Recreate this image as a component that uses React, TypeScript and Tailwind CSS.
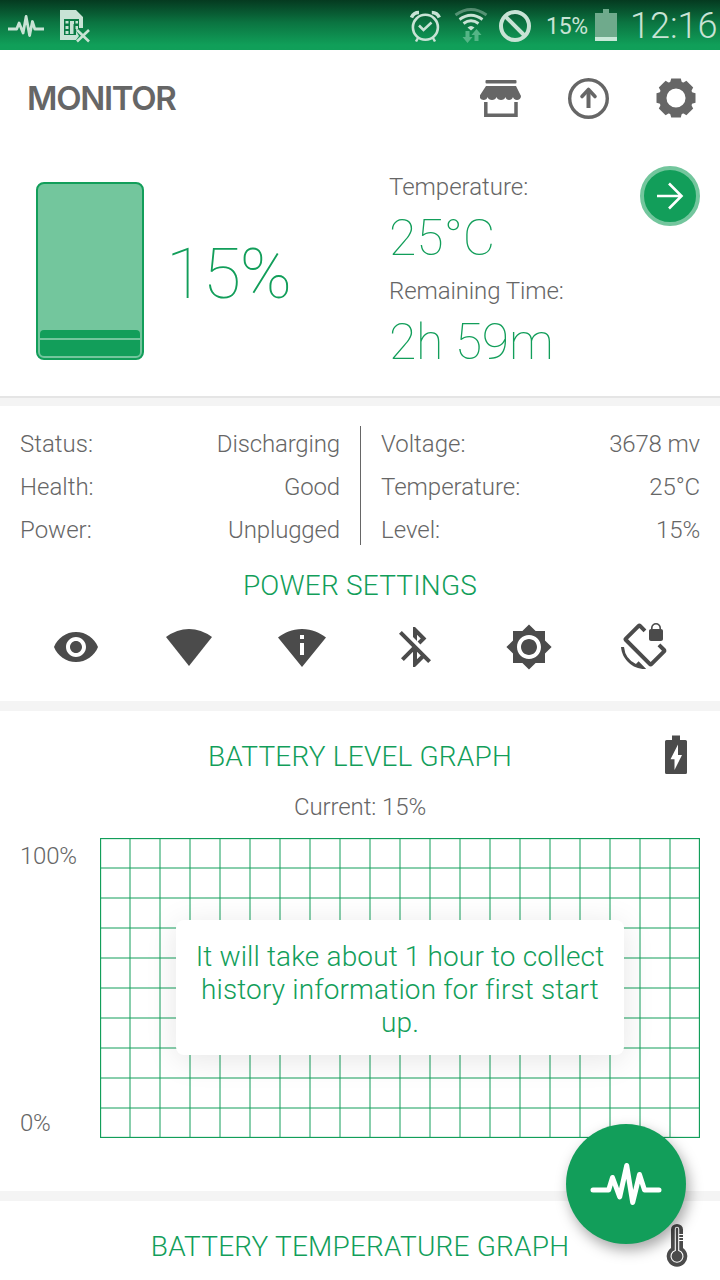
import type { ReactNode } from "react";
import {
  MdBluetoothDisabled,
  MdBrightness7,
  MdPermScanWifi,
  MdScreenLockRotation,
  MdVisibility,
} from "react-icons/md";

const PULSE = "M3 28h15.700l3.800-12.500 7.200 19.500 7-31.500 6 37 6.800-28 5 15.500h14.500";

function StatusBar() {
  return (
    <div className="flex h-[50px] items-center bg-linear-to-b from-[#053a20] via-[#0b7441] via-45% to-[#109f59] to-90% pl-2 text-[#c8e3d5]">
      <svg className="h-[50px] w-9" viewBox="8 0 36 50" fill="none" stroke="currentColor" strokeWidth="2.800" strokeLinejoin="round">
        <path d="M8 29h8.700l2.400-6 4 10 3-16.500 3.500 19 2.800-14 2.400 7.500H44" />
      </svg>
      <svg className="ml-[15px] h-[50px] w-8" viewBox="59 0 32 50">
        <path d="M60 10h16l7 7v11l-4 0-3 3 3 5-3 4H60z" fill="currentColor" />
        <path d="M64 19h15v11l-3-1v6H64z" fill="#0b7b45" />
        <path d="M65.500 21h3v2.500h-3zM65.500 26h3v3h-3zM65.500 31h3v3h-3zM70 21h4v3h-.5v10H70zM75.500 21H78v2.500h-2.500zM75.500 26H78v3h-2.500z" fill="currentColor" />
        <path d="M77 30l12 11.500M89 30L77 41.500" stroke="currentColor" strokeWidth="2.600" fill="none" />
      </svg>
      <svg className="ml-auto h-[50px] w-[31px]" viewBox="410 0 31 50" fill="none" stroke="currentColor">
        <circle cx="425.400" cy="27.300" r="12.500" strokeWidth="2.600" />
        <path d="M419 25.500l4.500 4.500 8-7.500" strokeWidth="2.500" />
        <path d="M411.500 17.500q2-5 7.500-5M439.300 17.500q-2-5-7.500-5" strokeWidth="3.500" />
        <path d="M418 38l-2 3.500M433 38l2 3.500" strokeWidth="2.500" />
      </svg>
      <svg className="ml-[13px] h-[50px] w-[34px]" viewBox="454 0 34 50" fill="none" stroke="currentColor">
        <path d="M455.500 15q15.500-11 31 0" strokeWidth="2.800" opacity=".4" />
        <path d="M459.500 19.500q11.500-8.500 23 0M463.500 23.500q7.500-5.500 15 0" strokeWidth="2.800" />
        <path d="M467.500 27.500q3.500-3 7 0l-3.500 3z" fill="currentColor" stroke="none" />
        <path d="M469.500 31v6h3l-5 6-5-6h3v-6zM474.500 41v-6h-3l5-6 5 6h-3v6z" fill="#54b586" stroke="none" />
      </svg>
      <svg className="ml-[10px] h-[50px] w-[34px]" viewBox="498 0 34 50" fill="none" stroke="currentColor" strokeWidth="4">
        <circle cx="515" cy="26" r="14" />
        <path d="M505 16l20 20" />
      </svg>
      <span className="ml-[14px] mt-1 w-[43px] text-[23px] leading-7 font-normal whitespace-nowrap tracking-[-0.3px]">15%</span>
      <svg className="ml-[6px] h-[50px] w-[22px]" viewBox="595 0 22 50">
        <path d="M595 13h8V9h6v4h8v24h-22z" fill="#6faa8c" />
        <path d="M595 37h22v4h-22z" fill="#c8e8d8" />
      </svg>
      <span className="ml-[13px] mt-0.5 w-[90px] text-4xl font-light whitespace-nowrap">12:16</span>
    </div>
  );
}

function Header() {
  return (
    <header className="flex h-24 items-center pl-[27px] pr-6 text-[#666]">
      <h1 className="font-['Inter'] text-[33px] font-semibold leading-10 tracking-[-1.3px]">MONITOR</h1>
      <svg className="ml-auto h-[42px] w-[42px]" viewBox="479.500 77 42 42">
        <rect x="485" y="80" width="31" height="3.500" rx="1" fill="currentColor" />
        <path d="M485.500 86h30l5 10c0 2.500-2 4-4 4s-4-1.500-4-3c-1 4-7 4-7.500 0-1 4-8 4-9 0-1 4-8 4-9 0-.5 4-8 4-8-1z" fill="currentColor" />
        <path d="M485.300 102v13.300h30.200V102" fill="none" stroke="currentColor" strokeWidth="3.500" />
      </svg>
      <svg className="ml-[45px] h-[42px] w-[42px]" viewBox="-.5 0 42 42" fill="none" stroke="currentColor">
        <circle cx="21" cy="21.500" r="18.800" strokeWidth="3.400" />
        <path d="M21 31V14" strokeWidth="4" />
        <path d="M14.500 19.500l6.500-7 6.500 7" strokeWidth="3.600" strokeLinecap="round" strokeLinejoin="round" />
      </svg>
      <svg className="ml-[47px] h-10 w-10" viewBox="-20 -20 40 40" fill="none" stroke="currentColor">
        <circle r="13.300" strokeWidth="7.500" />
        {[0, 45, 90, 135, 180, 225, 270, 315].map((a) => (
          <path key={a} d="M-6-15l1.200-4.500h9.600L6-15z" fill="currentColor" stroke="none" transform={`rotate(${a})`} />
        ))}
      </svg>
    </header>
  );
}

function Summary() {
  return (
    <section className="flex h-[252px] items-start border-b-2 border-[#e5e5e5] pl-9">
      <div className="mt-9 flex h-[178px] w-[108px] flex-col justify-end gap-0.5 rounded-lg border-2 border-[#129e5a] bg-[#73c69d] p-0.5">
        <div className="h-2 rounded-t bg-[#129e5a]" />
        <div className="h-4 rounded-b bg-[#129e5a]" />
      </div>
      <div className="ml-[22px] mt-[86px] w-[223px] text-[70px] font-thin leading-[84px] tracking-[-1.5px] text-[#129e5a]">15%</div>
      <div className="mt-[27px] font-thin">
        <p className="text-2xl font-light leading-7">Temperature:</p>
        <p className="pb-0.5 text-[50px] leading-[74px] text-[#129e5a]">25°C</p>
        <p className="text-2xl font-light leading-7 tracking-[-0.1px]">Remaining Time:</p>
        <p className="pb-0.5 text-[50px] leading-[74px] tracking-[-0.3px] text-[#129e5a]">2h 59m</p>
      </div>
      <button className="ml-auto mr-5 mt-5 flex size-[60px] items-center justify-center rounded-full border-4 border-[#73c69d] bg-[#129e5a]">
        <svg className="size-8" viewBox="0 0 32 32" fill="none" stroke="white" strokeWidth="2.600">
          <path d="M3 16h25M15 3.500L27.500 16 15 28.500" />
        </svg>
      </button>
    </section>
  );
}

function Info({ label, value }: { label: string; value: string }) {
  return (
    <div className="flex h-[43px] items-center justify-between">
      <span>{label}</span>
      <span className="tracking-[-0.15px]">{value}</span>
    </div>
  );
}

function Title({ children }: { children: ReactNode }) {
  return <h2 className="pt-px text-center text-[28px] font-light leading-[33px] tracking-[0.2px] text-[#129e5a]">{children}</h2>;
}

function Details() {
  return (
    <section className="mt-2 h-[295px] bg-white">
      <div className="flex px-5 pt-4">
        <div className="w-[320px]">
          <Info label="Status:" value="Discharging" />
          <Info label="Health:" value="Good" />
          <Info label="Power:" value="Unplugged" />
        </div>
        <div className="ml-5 mt-1 h-[119px] w-px bg-[#666]" />
        <div className="ml-5 flex-1">
          <Info label="Voltage:" value="3678 mv" />
          <Info label="Temperature:" value="25°C" />
          <Info label="Level:" value="15%" />
        </div>
      </div>
      <div className="mt-[17px]">
        <Title>POWER SETTINGS</Title>
      </div>
      <div className="mt-[21px] flex gap-[65px] pl-[52px] text-[#4b4b4b]">
        <MdVisibility size={48} />
        <svg className="size-12" viewBox="0 0 48 48" fill="currentColor">
          <path d="M1 14Q12 6 24 6t23 8L24 43z" />
        </svg>
        <MdPermScanWifi size={48} />
        <MdBluetoothDisabled size={48} />
        <MdBrightness7 size={48} className="ml-px" />
        <MdScreenLockRotation size={48} className="ml-px" />
      </div>
    </section>
  );
}

function LevelGraph() {
  const cols = Array.from({ length: 19 }, (_, i) => (i + 1) * 30);
  const rows = Array.from({ length: 9 }, (_, i) => (i + 1) * 30);

  return (
    <section className="mt-2.5 h-[480px] bg-white pt-7">
      <div className="relative">
        <Title>BATTERY LEVEL GRAPH</Title>
        <svg className="absolute right-8 top-[-4px] h-10 w-6 text-[#4b4b4b]" viewBox="0 0 24 40">
          <path d="M8 .5h8V5h5.500Q23 5 23 6.500v31q0 1.500-1.500 1.500h-19Q1 39 1 37.500v-31Q1 5 2.500 5H8z" fill="currentColor" />
          <path d="M14 9.500v10.500h4L10.500 35V24.300H6.500z" fill="white" />
        </svg>
      </div>
      <p className="mt-5 text-center leading-7 tracking-[-0.1px]">Current: 15%</p>
      <div className="mt-[17px] flex px-5">
        <div className="flex h-[300px] w-20 flex-col justify-between pb-px pt-1 tracking-[-0.2px]">
          <span className="leading-7">100%</span>
          <span className="leading-7">0%</span>
        </div>
        <div className="relative">
          <svg className="h-[300px] w-[600px]" viewBox="0 0 600 300" stroke="#129e5a" fill="none">
            {cols.map((x) => (
              <path key={x} d={`M${x} 0v300`} />
            ))}
            {rows.map((y) => (
              <path key={y} d={`M0 ${y}h600`} />
            ))}
            <rect x=".5" y=".5" width="599" height="299" strokeWidth="1.300" />
          </svg>
          <div className="absolute left-[76px] top-[82px] flex h-[135px] w-[448px] items-center justify-center rounded-lg bg-white px-4 pt-1 text-center text-[28px] leading-[33px] tracking-[0.15px] text-[#129e5a] shadow-[0_5px_32px_rgba(0,0,0,0.1)] [font-variant-ligatures:none]">
            It will take about 1 hour to collect
            <br />
            history information for first start
            <br />
            up.
          </div>
        </div>
      </div>
    </section>
  );
}

function TemperatureGraph() {
  return (
    <section className="relative mt-2.5 h-[79px] bg-white pt-7">
      <Title>BATTERY TEMPERATURE GRAPH</Title>
      <svg className="absolute right-[32px] top-[23px] h-[44px] w-[22px]" viewBox="0 0 22 44">
        <path d="M5 5.500a6 5.500 0 0 1 12 0V24a10.300 10.300 0 1 1-12 0z" fill="#4b4b4b" />
        <path d="M9.300 5a1.700 1.700 0 0 1 3.400 0v21.500a6 6 0 1 1-3.400 0z" fill="#4b4b4b" stroke="#fff" strokeWidth="1.100" />
        <path d="M13 10.500h4M13 13.500h4M13 16.500h4" stroke="#fff" strokeWidth="1" />
      </svg>
    </section>
  );
}

export default function App() {
  return (
    <div className="relative h-[1280px] w-[720px] overflow-hidden bg-[#f4f4f4] font-['Roboto',sans-serif] text-2xl font-light text-[#666]">
      <StatusBar />
      <div className="bg-white">
        <Header />
        <Summary />
      </div>
      <Details />
      <LevelGraph />
      <TemperatureGraph />
      <button className="absolute bottom-9 right-[34px] flex size-[120px] items-center justify-center rounded-full bg-[#129e5a] shadow-[3px_6px_14px_rgba(0,0,0,0.35)]">
        <svg className="h-[44px] w-[72px]" viewBox="0 0 72 44" fill="none" stroke="white" strokeWidth="5" strokeLinecap="round" strokeLinejoin="round">
          <path d={PULSE} />
        </svg>
      </button>
    </div>
  );
}
